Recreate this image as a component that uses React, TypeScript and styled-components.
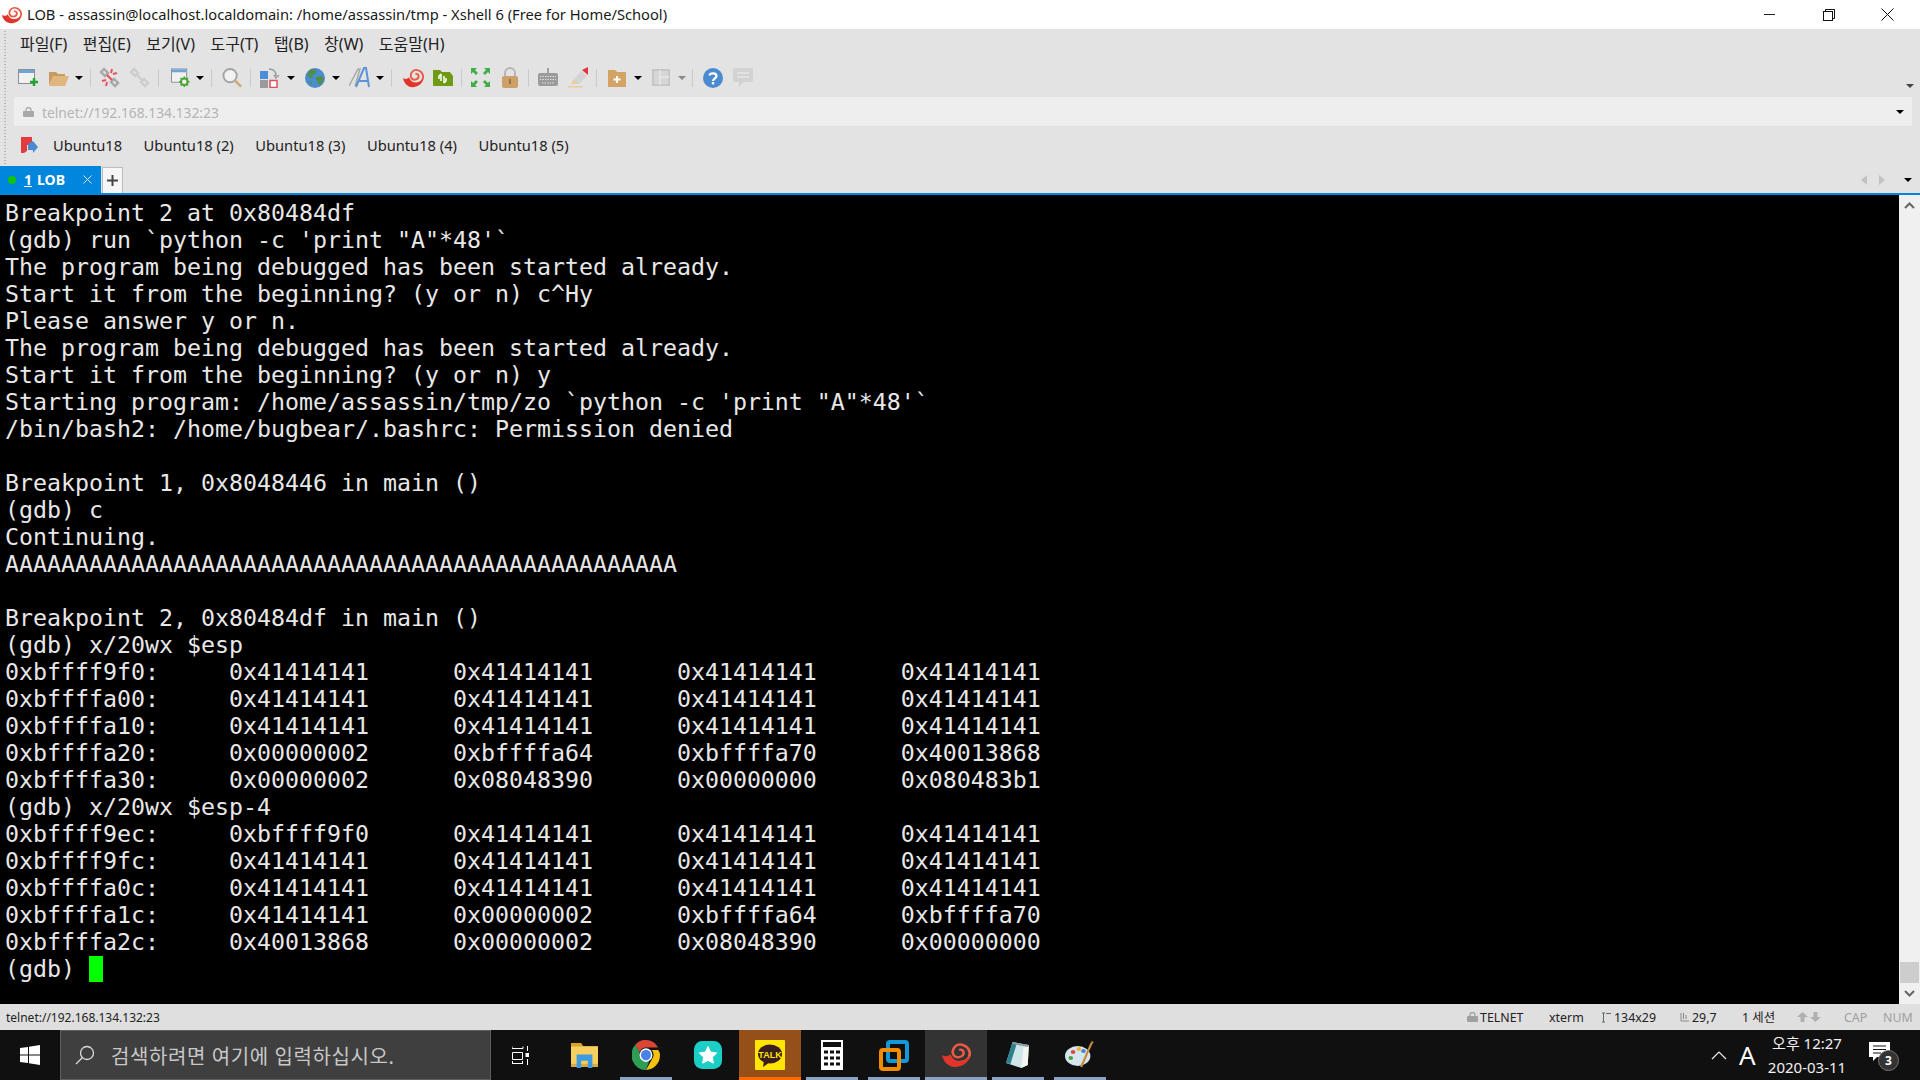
import React from "react";
import styled, { createGlobalStyle } from "styled-components";

const Global = createGlobalStyle`
  html, body { margin: 0; padding: 0; overflow: hidden; background: #000; }
  * { box-sizing: border-box; }
`;

const UI = `"Noto Sans", "Noto Sans CJK KR", sans-serif`;

const Win = styled.div`
  width: 1920px; height: 1080px; display: flex; flex-direction: column; overflow: hidden;
  font-family: ${UI}; background: #e3e3e3;
`;
const TitleBar = styled.div`
  height: 29px; background: #fff; display: flex; align-items: center; padding: 0 3px 0 2px; flex: none;
`;
const TitleText = styled.span`
  font-size: 14.7px; color: #1a1a1a; margin-left: 5px; white-space: nowrap; flex: 1; margin-top: -1px;
`;
const WinBtn = styled.div`
  width: 59px; height: 29px; display: flex; align-items: center; justify-content: center;
`;
const Chrome = styled.div`
  display: flex; flex-direction: column; flex: none; position: relative; height: 137px;
  background: #e3e3e3;
`;
const Grip = styled.div`
  position: absolute; left: 4px; top: 2px; bottom: 2px; width: 2px;
  background: repeating-linear-gradient(#b5b5b5 0 1px, transparent 1px 3px);
`;
const MenuBar = styled.div`
  height: 29px; display: flex; align-items: center; gap: 15.5px; padding: 0 0 1px 20px;
  font-size: 16px; color: #222; flex: none;
`;
const ToolBar = styled.div`
  height: 39px; display: flex; align-items: center; padding-left: 18px; position: relative; flex: none;
`;
const Tool = styled.div<{ $gap?: number; $w: number }>`
  margin-left: ${(p) => p.$gap ?? 0}px; width: ${(p) => p.$w}px; height: 22px; flex: none;
  display: flex; align-items: center; justify-content: center;
`;
const Sep = styled.div<{ $gap: number }>`
  margin-left: ${(p) => p.$gap}px; width: 1px; height: 18px; background: #cacaca; flex: none;
`;
const Caret = styled.div<{ $gap?: number; $size?: number; $color?: string }>`
  margin-left: ${(p) => p.$gap ?? 0}px; flex: none; width: 0; height: 0;
  border-left: ${(p) => p.$size ?? 4}px solid transparent;
  border-right: ${(p) => p.$size ?? 4}px solid transparent;
  border-top: ${(p) => p.$size ?? 4}px solid ${(p) => p.$color ?? "#000"};
`;
const OverflowCaret = styled.div`
  position: absolute; right: 6px; top: 26px;
`;
const AddressBar = styled.div`
  height: 29px; margin: 0 8px 0 14px; background: #eeeeee; display: flex; align-items: center;
  padding: 1px 8px 0 9px; flex: none; font-size: 13.8px; color: #b4b4b4;
`;
const AddressText = styled.span`
  margin-left: 8px; flex: 1;
`;
const LinkBar = styled.div`
  height: 40px; display: flex; align-items: center; padding: 0 0 2px 21px; font-size: 14.7px; color: #222; flex: none;
`;
const LinkItem = styled.span<{ $first?: boolean }>`
  margin-left: ${(p) => (p.$first ? 15 : 21.5)}px;
`;
const TabBar = styled.div`
  height: 29px; flex: none; display: flex; align-items: flex-end; background: #e3e3e3;
  border-bottom: 2px solid #0086dc;
`;
const ActiveTab = styled.div`
  width: 101px; height: 27px; background: #0086dc; color: #fff; display: flex; align-items: center;
  padding-left: 8px; font-size: 14px; font-weight: 700; position: relative;
`;
const Dot = styled.span`
  width: 8px; height: 8px; border-radius: 50%; background: #0fc50f; margin-right: 8px; flex: none;
`;
const TabNum = styled.u`
  margin-right: 5px;
`;
const TabClose = styled.span`
  position: absolute; right: 9px; top: 9px; display: flex;
`;
const PlusTab = styled.div`
  width: 21px; height: 26px; margin-left: 1px; background: #f6f6f6; border: 1px solid #bdbdbd; border-bottom: 0;
  display: flex; align-items: center; justify-content: center;
`;
const TabNav = styled.div`
  margin-left: auto; height: 27px; display: flex; align-items: center; padding-right: 8px;
`;
const NavArrow = styled.div<{ $dir: "l" | "r"; $gap?: number }>`
  width: 0; height: 0; margin-left: ${(p) => p.$gap ?? 0}px;
  border-top: 5px solid transparent; border-bottom: 5px solid transparent;
  ${(p) => (p.$dir === "l" ? "border-right: 6px solid #c2c2c2;" : "border-left: 6px solid #c2c2c2;")}
`;
const Main = styled.div`
  height: 809px; flex: none; display: flex; background: #000;
`;
const Term = styled.pre`
  margin: 0; flex: 1; padding: 4px 0 0 5px; overflow: hidden; white-space: pre; color: #e8e8e8;
  font-family: "DejaVu Sans Mono", monospace; font-size: 23.25px; line-height: 27px;
`;
const Cursor = styled.span`
  display: inline-block; width: 14px; height: 26px; margin-top: 1px; background: #00ff00; vertical-align: top;
`;
const Scroll = styled.div`
  width: 21px; background: #f0f0f0; display: flex; flex-direction: column; align-items: center; flex: none;
`;
const ScrollUp = styled.div`
  height: 21px; display: flex; align-items: center; justify-content: center; flex: none;
`;
const ScrollSpace = styled.div`
  flex: 1;
`;
const Thumb = styled.div`
  width: 19px; height: 21px; background: #cdcdcd; flex: none;
`;
const StatusBar = styled.div`
  height: 26px; flex: none; background: #dfdfdf; display: flex; align-items: center; padding-left: 6px;
  font-size: 12px; color: #222; white-space: nowrap;
`;
const StatusLeft = styled.span`
  flex: 1;
`;
const StatusItem = styled.span<{ $w: number; $muted?: boolean }>`
  width: ${(p) => p.$w}px; display: flex; align-items: center; gap: 2px; flex: none; font-size: 12.4px;
  color: ${(p) => (p.$muted ? "#a0a0a0" : "#222")};
`;
const TaskBar = styled.div`
  height: 50px; flex: none; background: #101010; display: flex; align-items: stretch; color: #fff;
`;
const StartBtn = styled.div`
  width: 60px; display: flex; align-items: center; justify-content: center; flex: none;
`;
const SearchBox = styled.div`
  width: 431px; background: #3f3f3f; border: 1px solid #5e5e5e; display: flex; align-items: center;
  padding-left: 14px; font-size: 20px; letter-spacing: .6px; color: #c8c8c8; flex: none; white-space: nowrap;
`;
const SearchLabel = styled.span`
  margin-left: 16px;
`;
const TaskView = styled.div`
  width: 62px; padding-right: 4px; display: flex; align-items: center; justify-content: center; flex: none;
`;
const AppSlot = styled.div<{ $bg?: string; $line?: string; $fullLine?: boolean }>`
  width: 62px; flex: none; position: relative; display: flex; align-items: center; justify-content: center;
  background: ${(p) => p.$bg ?? "transparent"};
  &::after {
    content: ""; position: absolute; bottom: 0; height: 3px;
    left: ${(p) => (p.$fullLine ? 0 : 5)}px; right: ${(p) => (p.$fullLine ? 0 : 5)}px;
    background: ${(p) => p.$line ?? "transparent"};
  }
`;
const Tray = styled.div`
  margin-left: auto; display: flex; align-items: center; flex: none;
`;
const ImeLetter = styled.span`
  font-size: 26px; margin-left: 12px; width: 25px; line-height: 1;
`;
const Clock = styled.div`
  width: 86px; text-align: center; font-size: 15px; line-height: 24px; color: #f0f0f0; white-space: nowrap;
`;
const Notify = styled.div`
  position: relative; width: 30px; height: 30px; margin: 0 21px 0 19px; padding-top: 2px;
`;
const Badge = styled.span`
  position: absolute; left: 9px; top: 10px; width: 21px; height: 21px; border-radius: 50%;
  background: #333; border: 1px solid #777; font-size: 12px; font-weight: 700; color: #fff;
  display: flex; align-items: center; justify-content: center;
`;

const Snail = ({ w = 20, h = 20 }: { w?: number; h?: number }) => (
  <svg width={w} height={h} viewBox="0 0 24 24" preserveAspectRatio="none">
    <path d="M7 14C10 21 22 20 23 11 23 4 15 0 11 4 7 8 9 15 14 14 19 13 19 7 15 7" fill="none" stroke="#ea5a44" strokeWidth="2.200" strokeLinecap="round" />
    <path d="M0 12c3 2 5 1 7-1 1 7 11 10 16 2-1 7-7 10-12 10C5 23 1 18 0 12z" fill="#e2352a" />
  </svg>
);
const NewIcon = () => (
  <svg width="20" height="22" viewBox="0 0 20 22">
    <rect x=".5" y="2.500" width="16" height="14" fill="#f1f1f1" stroke="#8a8f96" />
    <rect x="1" y="3" width="15" height="3" fill="#6ea4da" />
    <path d="M12 15h8M16 11v8" stroke="#1fa52d" strokeWidth="2.400" />
  </svg>
);
const FolderIcon = () => (
  <svg width="20" height="18" viewBox="0 0 20 18">
    <path d="M0 3h7l2 2h7v3H4L0 16z" fill="#c79a5f" />
    <path d="M4 7h16l-4 10H0z" fill="#e0b67c" />
  </svg>
);
const ChainIcon = ({ broken }: { broken?: boolean }) => (
  <svg width="21" height="21" viewBox="0 0 21 21" fill="none">
    <path d="M2 5l3-3 4 4-3 3zM12 15l3-3 4 4-3 3z" stroke={broken ? "#a9a9a9" : "#cdcdcd"} strokeWidth="2.400" />
    {broken ? (
      <path d="M8 8l5 5M13 2l-1 4M18 6l-4 1M3 14l4-1M7 19l1-4" stroke="#e8505b" strokeWidth="2" />
    ) : (
      <path d="M7 7l7 7" stroke="#cdcdcd" strokeWidth="2.400" />
    )}
  </svg>
);
const SettingIcon = () => (
  <svg width="20" height="21" viewBox="0 0 20 21" fill="none">
    <rect x=".5" y="1.500" width="16" height="14" fill="#f1f1f1" stroke="#8a8f96" />
    <rect x="1" y="2" width="15" height="3" fill="#6ea4da" />
    <circle cx="14" cy="15" r="3.500" stroke="#47a530" strokeWidth="2.200" fill="#f1f1f1" />
    <path d="M14 9.500v2M14 18.500v2M8.500 15h2M17.500 15h2M10 11l1.500 1.500M18 11l-1.500 1.500M10 19l1.500-1.500M18 19l-1.500-1.500" stroke="#47a530" strokeWidth="1.500" />
  </svg>
);
const SearchIcon = () => (
  <svg width="21" height="21" viewBox="0 0 21 21" fill="none">
    <circle cx="8.500" cy="8.500" r="7" stroke="#a3a3a3" strokeWidth="2" fill="#f2f2f2" />
    <path d="M14 14l6 6" stroke="#d2a76c" strokeWidth="2.600" />
  </svg>
);
const TransferIcon = () => (
  <svg width="20" height="20" viewBox="0 0 20 20" fill="none">
    <rect x="0" y="3" width="8" height="8" fill="#4a8fd6" />
    <rect x="0" y="12" width="8" height="8" fill="#9a9a9a" />
    <rect x="10" y="12.500" width="7" height="7" stroke="#e2505a" strokeWidth="1.500" fill="#fff" />
    <path d="M9 1c4 0 7 2 7 7M14 7l2 3 3-3" stroke="#9b9b9b" strokeWidth="1.400" />
  </svg>
);
const GlobeIcon = () => (
  <svg width="20" height="20" viewBox="0 0 20 20">
    <circle cx="10" cy="10" r="10" fill="#4b8bd0" />
    <path d="M5 2c3-1 6 0 7 1l-2 3-3 1 1 3-3 0-3-3zM11 9l6-1 2 3-3 5-2 1-1-3-2-2zM4 13l2 0 1 3-1 1z" fill="#4f8f47" />
  </svg>
);
const FontIcon = () => (
  <svg width="21" height="21" viewBox="0 0 21 21" fill="none">
    <path d="M0 19L9 2h2L6 19" stroke="#a8a8a8" strokeWidth="1.500" />
    <path d="M7 20L15 1h2l3 19M10 14h9" stroke="#5a94d6" strokeWidth="2" />
  </svg>
);
const XftpIcon = () => (
  <svg width="20" height="18" viewBox="0 0 20 18">
    <path d="M0 1h7l2 2h8l3 4v10H0z" fill="#6f9a13" />
    <path d="M8 5v7M11 7v7M8 5L6 7v3M11 14l2-2V9" stroke="#fff" strokeWidth="1.500" fill="none" />
  </svg>
);
const FullIcon = () => (
  <svg width="19" height="19" viewBox="0 0 19 19" fill="#3fae49">
    <path d="M0 0h6L4 2l3 3-2 2-3-3-2 2zM19 0v6l-2-2-3 3-2-2 3-3-2-2zM0 19v-6l2 2 3-3 2 2-3 3 2 2zM19 19h-6l2-2-3-3 2-2 3 3 2-2z" />
  </svg>
);
const LockIcon = () => (
  <svg width="16" height="21" viewBox="0 0 16 21" fill="none">
    <path d="M3 9V6a5 5 0 0 1 10 0v3" stroke="#b5b5b5" strokeWidth="2" />
    <rect y="9" width="16" height="12" rx="2" fill="#cda06a" />
    <rect x="7" y="12" width="2" height="5" fill="#8f7452" />
  </svg>
);
const KeyboardIcon = () => (
  <svg width="20" height="19" viewBox="0 0 20 19" fill="none">
    <path d="M10 0v5" stroke="#8a8a8a" strokeWidth="1.500" />
    <rect y="5" width="20" height="13" rx="2" fill="#9b9b9b" />
    <path d="M2 8.500h16M2 11.500h16M4 15h12" stroke="#dcdcdc" strokeWidth="1" strokeDasharray="1.500 1" />
  </svg>
);
const HighlightIcon = () => (
  <svg width="21" height="21" viewBox="0 0 21 21">
    <path d="M5 13L13 4l6 5-8 8-5 0z" fill="#d4d4d4" />
    <path d="M14 3l6-3v8z" fill="#e33240" />
    <path d="M5 13l5 4-7 0z" fill="#eecb9b" />
    <rect y="19" width="15" height="1.500" fill="#eecb9b" />
  </svg>
);
const FolderPlusIcon = () => (
  <svg width="18" height="18" viewBox="0 0 18 18">
    <path d="M0 1h7l2 2h9v15H0z" fill="#d3a363" />
    <path d="M9 7v7M5.500 10.500h7" stroke="#fff" strokeWidth="2" />
  </svg>
);
const LayoutIcon = () => (
  <svg width="18" height="17" viewBox="0 0 18 17" fill="none">
    <rect x="1" y="1" width="16" height="15" stroke="#c6c6c6" strokeWidth="2" fill="#d6d6d6" />
    <path d="M8 1v15M8 8h9" stroke="#e8e8e8" strokeWidth="1.500" />
  </svg>
);
const HelpIcon = () => (
  <svg width="20" height="20" viewBox="0 0 20 20">
    <circle cx="10" cy="10" r="10" fill="#4a8ad0" />
    <path d="M6.500 7.500C7 4.500 13.500 4.500 13.500 8c0 2.500-3.500 2.500-3.500 5" fill="none" stroke="#fff" strokeWidth="2.200" />
    <rect x="8.800" y="14" width="2.400" height="2.400" fill="#fff" />
  </svg>
);
const ChatIcon = () => (
  <svg width="20" height="20" viewBox="0 0 20 20">
    <path d="M2 0h16a2 2 0 0 1 2 2v10a2 2 0 0 1-2 2h-8l-4 5v-5H2a2 2 0 0 1-2-2V2a2 2 0 0 1 2-2z" fill="#d2d2d2" />
    <path d="M4 5h12M4 9h12" stroke="#e8e8e8" strokeWidth="1.500" />
  </svg>
);
const FlagIcon = () => (
  <svg width="17" height="17" viewBox="0 0 17 17">
    <path d="M0 0h11v8l-5 0v6L3 16H0z" fill="#e33b3e" />
    <path d="M7 7l5-3 5 6-5 6v-3H7z" fill="#4a8ad0" />
  </svg>
);
const SmallLock = ({ c }: { c: string }) => (
  <svg width="11" height="10" viewBox="0 0 11 10" fill="none">
    <path d="M3 4V3a2.500 2.500 0 0 1 5 0v1" stroke={c} strokeWidth="1.300" />
    <rect y="4" width="11" height="6" rx="1" fill={c} />
  </svg>
);
const ChevronUp = () => (
  <svg width="11" height="7" viewBox="0 0 11 7" fill="none"><path d="M1 6l4.500-4.500L10 6" stroke="#666" strokeWidth="2" /></svg>
);
const ChevronDown = () => (
  <svg width="11" height="7" viewBox="0 0 11 7" fill="none"><path d="M1 1l4.500 4.500L10 1" stroke="#666" strokeWidth="2" /></svg>
);
const UpDown = ({ up }: { up?: boolean }) => (
  <svg width="11" height="10" viewBox="0 0 11 10" fill="#b0b0b0">
    {up ? <path d="M5.500 0L11 5H7.500v5h-4V5H0z" /> : <path d="M5.500 10L11 5H7.500V0h-4v5H0z" />}
  </svg>
);
const Explorer = () => (
  <svg width="27" height="25" viewBox="0 0 24 24" preserveAspectRatio="none">
    <path d="M0 0h9l2 3H0z" fill="#d9a21f" />
    <rect y="3" width="24" height="20" fill="#f6cf5e" />
    <rect y="20" width="24" height="3" fill="#d9a945" />
    <path d="M5 11h14v13h-4v-7H9v7H5z" fill="#3b9ae1" />
  </svg>
);
const ChromeIcon = () => (
  <svg width="28" height="30" viewBox="0 0 24 24" preserveAspectRatio="none">
    <path d="M12 0a12 12 0 0 1 10.400 6H12a6 6 0 0 0-5.600 3.800L3 3.600A12 12 0 0 1 12 0z" fill="#dc4437" />
    <path d="M24 12a12 12 0 0 1-12 12l5-8.500A6 6 0 0 0 17 8h5.400c1 1.200 1.600 2.500 1.600 4z" fill="#f4c20d" />
    <path d="M12 24A12 12 0 0 1 3 3.600L8 13a5 5 0 0 0 7 3l-3 8z" fill="#2f9e54" />
    <circle cx="12" cy="12" r="5.500" fill="#fff" />
    <circle cx="12" cy="12" r="4.300" fill="#4a80ea" />
  </svg>
);
const StarApp = () => (
  <svg width="28" height="28" viewBox="0 0 24 24">
    <rect width="24" height="24" rx="7" fill="#1ccfc6" />
    <path d="M12 5l2.200 4.600 5 .7-3.600 3.500.9 5L12 16.400l-4.500 2.400.9-5-3.600-3.500 5-.7z" fill="#fff" stroke="#fff" strokeLinejoin="round" />
  </svg>
);
const Kakao = () => (
  <svg width="30" height="30" viewBox="0 0 30 30">
    <rect width="30" height="30" rx="1" fill="#ffe600" />
    <ellipse cx="15" cy="14" rx="12" ry="9.500" fill="#3a1d1d" />
    <path d="M9 20l-1 7 7-5z" fill="#3a1d1d" />
    <text x="15" y="17.500" fontSize="9" fontWeight="700" fontFamily="Liberation Sans, sans-serif" fill="#ffe600" textAnchor="middle">TALK</text>
  </svg>
);
const Calc = () => (
  <svg width="22" height="30" viewBox="0 0 22 30">
    <rect width="22" height="30" fill="#fff" />
    <rect x="2" y="2" width="18" height="5" fill="#101010" />
    <path d="M3 12h4M9 12h4M15 12h4M3 18h4M9 18h4M15 18h4M3 24h4M9 24h4M15 24h4" stroke="#101010" strokeWidth="3" />
  </svg>
);
const XftpApp = () => (
  <svg width="30" height="31" viewBox="0 0 30 31" fill="none">
    <rect x="9" y="2" width="19" height="19" rx="2" stroke="#1398d8" strokeWidth="4" />
    <rect x="2" y="10" width="18" height="19" rx="2" stroke="#f28c00" strokeWidth="4" />
  </svg>
);
const Notepad = () => (
  <svg width="26" height="28" viewBox="0 0 24 28" preserveAspectRatio="none">
    <path d="M7 1l15 3-1 20-6 3L1 22z" fill="#cfe6e8" />
    <path d="M15 27l6-3 1-20-5 3z" fill="#f3f6f0" />
    <path d="M1 22L7 1l4 1L5 23z" fill="#2c7f8c" />
    <path d="M7 1l15 3-.5 2L7 3z" fill="#8a9aa0" />
  </svg>
);
const Paint = () => (
  <svg width="30" height="30" viewBox="0 0 26 30" preserveAspectRatio="none">
    <ellipse cx="11" cy="16" rx="11" ry="10" fill="#d6e6ee" />
    <circle cx="7" cy="12" r="2" fill="#e0483c" />
    <circle cx="12" cy="9" r="2" fill="#f0b429" />
    <circle cx="5" cy="18" r="2" fill="#4aa13f" />
    <circle cx="16" cy="11" r="2" fill="#3c86d2" />
    <path d="M14 27L23 3" stroke="#c58a3d" strokeWidth="2" />
    <path d="M22 6l1-5 2 1z" fill="#c58a3d" />
  </svg>
);

const lines = `Breakpoint 2 at 0x80484df
(gdb) run \`python -c 'print "A"*48'\`
The program being debugged has been started already.
Start it from the beginning? (y or n) c^Hy
Please answer y or n.
The program being debugged has been started already.
Start it from the beginning? (y or n) y
Starting program: /home/assassin/tmp/zo \`python -c 'print "A"*48'\`
/bin/bash2: /home/bugbear/.bashrc: Permission denied

Breakpoint 1, 0x8048446 in main ()
(gdb) c
Continuing.
AAAAAAAAAAAAAAAAAAAAAAAAAAAAAAAAAAAAAAAAAAAAAAAA

Breakpoint 2, 0x80484df in main ()
(gdb) x/20wx $esp
0xbffff9f0:     0x41414141      0x41414141      0x41414141      0x41414141
0xbffffa00:     0x41414141      0x41414141      0x41414141      0x41414141
0xbffffa10:     0x41414141      0x41414141      0x41414141      0x41414141
0xbffffa20:     0x00000002      0xbffffa64      0xbffffa70      0x40013868
0xbffffa30:     0x00000002      0x08048390      0x00000000      0x080483b1
(gdb) x/20wx $esp-4
0xbffff9ec:     0xbffff9f0      0x41414141      0x41414141      0x41414141
0xbffff9fc:     0x41414141      0x41414141      0x41414141      0x41414141
0xbffffa0c:     0x41414141      0x41414141      0x41414141      0x41414141
0xbffffa1c:     0x41414141      0x00000002      0xbffffa64      0xbffffa70
0xbffffa2c:     0x40013868      0x00000002      0x08048390      0x00000000
(gdb) `;

const menus = ["파일(F)", "편집(E)", "보기(V)", "도구(T)", "탭(B)", "창(W)", "도움말(H)"];
const links = ["Ubuntu18", "Ubuntu18 (2)", "Ubuntu18 (3)", "Ubuntu18 (4)", "Ubuntu18 (5)"];

export default function App() {
  return (
    <Win>
      <Global />
      <TitleBar>
        <Snail w={20} h={18} />
        <TitleText>LOB - assassin@localhost.localdomain: /home/assassin/tmp - Xshell 6 (Free for Home/School)</TitleText>
        <WinBtn><svg width="11" height="11" viewBox="0 0 11 11"><path d="M0 5.500h11" stroke="#222" /></svg></WinBtn>
        <WinBtn><svg width="12" height="12" viewBox="0 0 12 12" fill="none" stroke="#111"><rect x=".5" y="2.500" width="9" height="9" /><path d="M2.500 2.500v-2h9v9h-2" /></svg></WinBtn>
        <WinBtn><svg width="13" height="13" viewBox="0 0 13 13" stroke="#111"><path d="M.5.500l12 12M12.500.500l-12 12" /></svg></WinBtn>
      </TitleBar>
      <Chrome>
        <Grip />
        <MenuBar>{menus.map((m) => <span key={m}>{m}</span>)}</MenuBar>
        <ToolBar>
          <Tool $w={20}><NewIcon /></Tool>
          <Tool $gap={11} $w={20}><FolderIcon /></Tool>
          <Caret $gap={6} />
          <Sep $gap={7} />
          <Tool $gap={8} $w={21}><ChainIcon broken /></Tool>
          <Tool $gap={9} $w={21}><ChainIcon /></Tool>
          <Sep $gap={8} />
          <Tool $gap={12} $w={19}><SettingIcon /></Tool>
          <Caret $gap={6} />
          <Sep $gap={7} />
          <Tool $gap={10} $w={20}><SearchIcon /></Tool>
          <Sep $gap={8} />
          <Tool $gap={9} $w={20}><TransferIcon /></Tool>
          <Caret $gap={7} />
          <Tool $gap={10} $w={20}><GlobeIcon /></Tool>
          <Caret $gap={7} />
          <Tool $gap={9} $w={21}><FontIcon /></Tool>
          <Caret $gap={6} />
          <Sep $gap={7} />
          <Tool $gap={11} $w={21}><Snail w={21} h={20} /></Tool>
          <Tool $gap={9} $w={20}><XftpIcon /></Tool>
          <Sep $gap={8} />
          <Tool $gap={9} $w={19}><FullIcon /></Tool>
          <Tool $gap={12} $w={16}><LockIcon /></Tool>
          <Sep $gap={10} />
          <Tool $gap={9} $w={20}><KeyboardIcon /></Tool>
          <Tool $gap={10} $w={21}><HighlightIcon /></Tool>
          <Sep $gap={7} />
          <Tool $gap={11} $w={18}><FolderPlusIcon /></Tool>
          <Caret $gap={8} />
          <Tool $gap={10} $w={18}><LayoutIcon /></Tool>
          <Caret $gap={8} $color="#8a8a8a" />
          <Sep $gap={6} />
          <Tool $gap={10} $w={20}><HelpIcon /></Tool>
          <Tool $gap={10} $w={20}><ChatIcon /></Tool>
          <OverflowCaret><Caret $color="#444" /></OverflowCaret>
        </ToolBar>
        <AddressBar>
          <SmallLock c="#a9a9a9" />
          <AddressText>telnet://192.168.134.132:23</AddressText>
          <Caret />
        </AddressBar>
        <LinkBar>
          <FlagIcon />
          {links.map((l, i) => <LinkItem key={l} $first={i === 0}>{l}</LinkItem>)}
        </LinkBar>
      </Chrome>
      <TabBar>
        <ActiveTab>
          <Dot />
          <TabNum>1</TabNum>LOB
          <TabClose><svg width="9" height="9" viewBox="0 0 9 9" stroke="#cfe8f8"><path d="M.5.500l8 8M8.500.500l-8 8" /></svg></TabClose>
        </ActiveTab>
        <PlusTab><svg width="11" height="11" viewBox="0 0 11 11" stroke="#444" strokeWidth="2"><path d="M5.500 0v11M0 5.500h11" /></svg></PlusTab>
        <TabNav>
          <NavArrow $dir="l" />
          <NavArrow $dir="r" $gap={12} />
          <Caret $gap={19} />
        </TabNav>
      </TabBar>
      <Main>
        <Term>{lines}<Cursor /></Term>
        <Scroll>
          <ScrollUp><ChevronUp /></ScrollUp>
          <ScrollSpace />
          <Thumb />
          <ScrollUp><ChevronDown /></ScrollUp>
        </Scroll>
      </Main>
      <StatusBar>
        <StatusLeft>telnet://192.168.134.132:23</StatusLeft>
        <StatusItem $w={82}><SmallLock c="#a0a0a0" />TELNET</StatusItem>
        <StatusItem $w={52}>xterm</StatusItem>
        <StatusItem $w={79}><svg width="11" height="11" viewBox="0 0 11 11" fill="none" stroke="#666"><path d="M2.500 1v9M1 1h3M1 10h3M5 1.500h5" /></svg>134x29</StatusItem>
        <StatusItem $w={62}><svg width="10" height="10" viewBox="0 0 10 10" fill="none" stroke="#888"><path d="M1 1v8h8M3.500 1v6M6 3v4" /></svg>29,7</StatusItem>
        <StatusItem $w={55}>1 세션</StatusItem>
        <StatusItem $w={47} $muted><UpDown up /><UpDown /></StatusItem>
        <StatusItem $w={39} $muted>CAP</StatusItem>
        <StatusItem $w={37} $muted>NUM</StatusItem>
      </StatusBar>
      <TaskBar>
        <StartBtn>
          <svg width="20" height="20" viewBox="0 0 20 20" fill="#fff"><path d="M0 3l8-1v7.500H0zM9 1.800L20 0v9.500H9zM0 10.500h8V18l-8-1zM9 10.500h11V20L9 18.200z" /></svg>
        </StartBtn>
        <SearchBox>
          <svg width="20" height="20" viewBox="0 0 20 20" fill="none" stroke="#dcdcdc" strokeWidth="1.300"><circle cx="12" cy="8" r="6.500" /><path d="M7.500 12.500L1 19" /></svg>
          <SearchLabel>검색하려면 여기에 입력하십시오.</SearchLabel>
        </SearchBox>
        <TaskView>
          <svg width="17" height="19" viewBox="0 0 17 19" fill="none" stroke="#fff"><path d="M0 2.500h11M0 .5v2M11 .5v2M.5 6.500h10v7H.5zM0 17.500h11M.5 15v3M10.500 15v3M15.500 0v5M15.500 13v6" /><rect x="13.500" y="7" width="4" height="4" fill="#fff" stroke="none" /></svg>
        </TaskView>
        <AppSlot><Explorer /></AppSlot>
        <AppSlot $line="#8aa3c4"><ChromeIcon /></AppSlot>
        <AppSlot><StarApp /></AppSlot>
        <AppSlot $bg="#95501a" $line="#ff6a00" $fullLine><Kakao /></AppSlot>
        <AppSlot $line="#8aa3c4"><Calc /></AppSlot>
        <AppSlot $line="#8aa3c4"><XftpApp /></AppSlot>
        <AppSlot $bg="#333333" $line="#8aa3c4" $fullLine><Snail w={29} h={26} /></AppSlot>
        <AppSlot $line="#8aa3c4"><Notepad /></AppSlot>
        <AppSlot $line="#8aa3c4"><Paint /></AppSlot>
        <Tray>
          <svg width="16" height="9" viewBox="0 0 16 9" fill="none" stroke="#eee" strokeWidth="1.200"><path d="M1 8l7-7 7 7" /></svg>
          <ImeLetter>A</ImeLetter>
          <Clock>오후 12:27<br />2020-03-11</Clock>
          <Notify>
            <svg width="22" height="20" viewBox="0 0 22 20" fill="#fff"><path d="M0 0h21v15H8l-4 4v-4H0z" /><path d="M4 4h13M4 7.500h13M4 11h8" stroke="#111" strokeWidth="1.200" /></svg>
            <Badge>3</Badge>
          </Notify>
        </Tray>
      </TaskBar>
    </Win>
  );
}
